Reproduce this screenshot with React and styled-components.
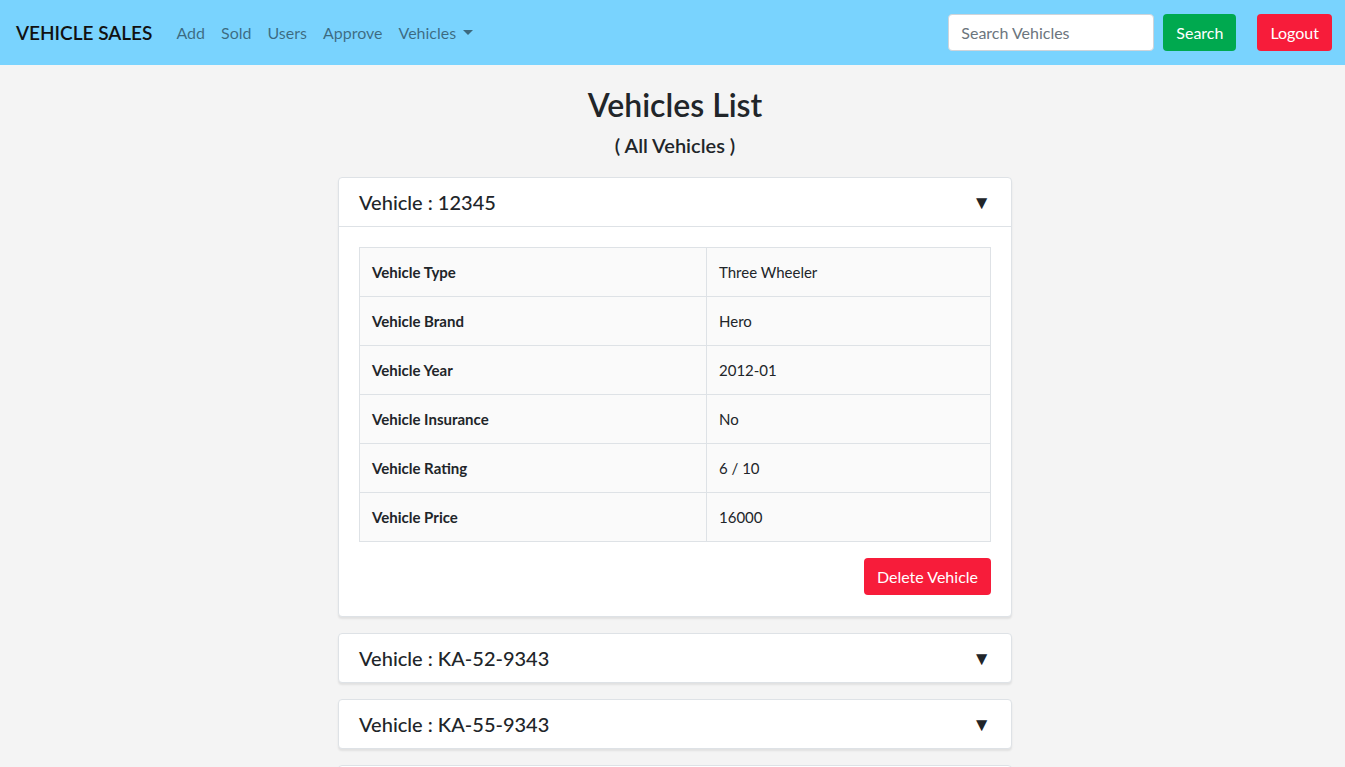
import React, {useState} from "react";
import styled, {createGlobalStyle} from "styled-components";

const GlobalStyle = createGlobalStyle`
  body {
    margin: 0;
    background: #f4f4f4;
    font-family: Lato, "Noto Sans", sans-serif;
    color: #212529;
  }
`;

const Nav = styled.nav`
  height: 65px;
  background: #79d3fe;
  display: flex;
  align-items: center;
  padding: 0 13px 0 16px;
`;

const Brand = styled.div`
  font-size: 19px;
  font-weight: 600;
  color: #111;
  margin-right: 24px;
`;

const NavLinks = styled.div`
  display: flex;
  gap: 16px;
  flex: 1;
`;

const NavLink = styled.a`
  color: rgba(0, 0, 0, 0.5);
  font-size: 16px;
  text-decoration: none;
  cursor: pointer;
  display: flex;
  align-items: center;
`;

const Caret = styled.span`
  display: inline-block;
  margin-left: 7px;
  border-top: 5px solid rgba(0, 0, 0, 0.5);
  border-left: 5px solid transparent;
  border-right: 5px solid transparent;
`;

const SearchForm = styled.form`
  display: flex;
  gap: 9px;
  margin-right: 21px;
`;

const SearchInput = styled.input`
  width: 206px;
  height: 37px;
  box-sizing: border-box;
  border: 1px solid #ced4da;
  border-radius: 4px;
  padding: 0 12px;
  font-family: inherit;
  font-size: 16px;
  &::placeholder { color: #6c757d; }
`;

const Button = styled.button`
  height: 37px;
  padding: 0 13px;
  border: none;
  border-radius: 4px;
  color: #fff;
  font-family: inherit;
  font-size: 16px;
  background: ${p => p.$color};
  cursor: pointer;
`;

const Main = styled.main`
  width: 674px;
  margin: 0 auto;
  padding: 21px 0 0 5px;
`;

const Title = styled.h1`
  margin: 0;
  text-align: center;
  font-size: 32px;
  font-weight: 600;
  line-height: 38px;
`;

const Subtitle = styled.h2`
  margin: 9px 0 20px;
  text-align: center;
  font-size: 20px;
  font-weight: 600;
  line-height: 24px;
`;

const Card = styled.div`
  background: #fff;
  border: 1px solid #dee2e6;
  border-radius: 4px;
  box-shadow: 0 2px 2px rgba(0, 0, 0, 0.08);
  margin-bottom: 16px;
`;

const CardHeader = styled.div`
  height: 48px;
  display: flex;
  align-items: center;
  justify-content: space-between;
  padding: 0 20px;
  font-size: 20px;
  font-weight: 500;
  cursor: pointer;
  border-bottom: ${p => (p.$open ? "1px solid #dee2e6" : "none")};
`;

const Arrow = styled.span`
  font-size: 19px;
  color: #212529;
`;

const CardBody = styled.div`
  padding: 20px 20px 21px;
`;

const Table = styled.table`
  width: 100%;
  border-collapse: collapse;
  background: #fafafa;
`;

const Cell = styled.td`
  border: 1px solid #dee2e6;
  height: 49px;
  box-sizing: border-box;
  padding: 0 12px;
  font-size: 15px;
  font-weight: ${p => (p.$bold ? 700 : 400)};
  width: ${p => (p.$bold ? "347px" : "auto")};
`;

const Actions = styled.div`
  display: flex;
  justify-content: flex-end;
  margin-top: 16px;
`;

const vehicles = [
  {
    id: "12345",
    details: [
      ["Vehicle Type", "Three Wheeler"],
      ["Vehicle Brand", "Hero"],
      ["Vehicle Year", "2012-01"],
      ["Vehicle Insurance", "No"],
      ["Vehicle Rating", "6 / 10"],
      ["Vehicle Price", "16000"],
    ],
  },
  {id: "KA-52-9343", details: []},
  {id: "KA-55-9343", details: []},
  {id: "KA-56-9343", details: []},
];

function VehicleCard({vehicle, open, onToggle}) {
  return (
    <Card>
      <CardHeader $open={open} onClick={onToggle}>
        <span>Vehicle : {vehicle.id}</span>
        <Arrow>▼</Arrow>
      </CardHeader>
      {open && (
        <CardBody>
          <Table>
            <tbody>
              {vehicle.details.map(([k, v]) => (
                <tr key={k}>
                  <Cell $bold>{k}</Cell>
                  <Cell>{v}</Cell>
                </tr>
              ))}
            </tbody>
          </Table>
          <Actions>
            <Button $color="#f71c3a">Delete Vehicle</Button>
          </Actions>
        </CardBody>
      )}
    </Card>
  );
}

export default function App() {
  const [openId, setOpenId] = useState("12345");
  return (
    <>
      <GlobalStyle/>
      <Nav>
        <Brand>VEHICLE SALES</Brand>
        <NavLinks>
          <NavLink>Add</NavLink>
          <NavLink>Sold</NavLink>
          <NavLink>Users</NavLink>
          <NavLink>Approve</NavLink>
          <NavLink>Vehicles<Caret/></NavLink>
        </NavLinks>
        <SearchForm onSubmit={ev => ev.preventDefault()}>
          <SearchInput placeholder="Search Vehicles"/>
          <Button $color="#00a94f">Search</Button>
        </SearchForm>
        <Button $color="#f71c3a">Logout</Button>
      </Nav>
      <Main>
        <Title>Vehicles List</Title>
        <Subtitle>( All Vehicles )</Subtitle>
        {vehicles.map(v => (
          <VehicleCard key={v.id} vehicle={v} open={openId === v.id}
                       onToggle={() => setOpenId(openId === v.id ? null : v.id)}/>
        ))}
      </Main>
    </>
  );
}
